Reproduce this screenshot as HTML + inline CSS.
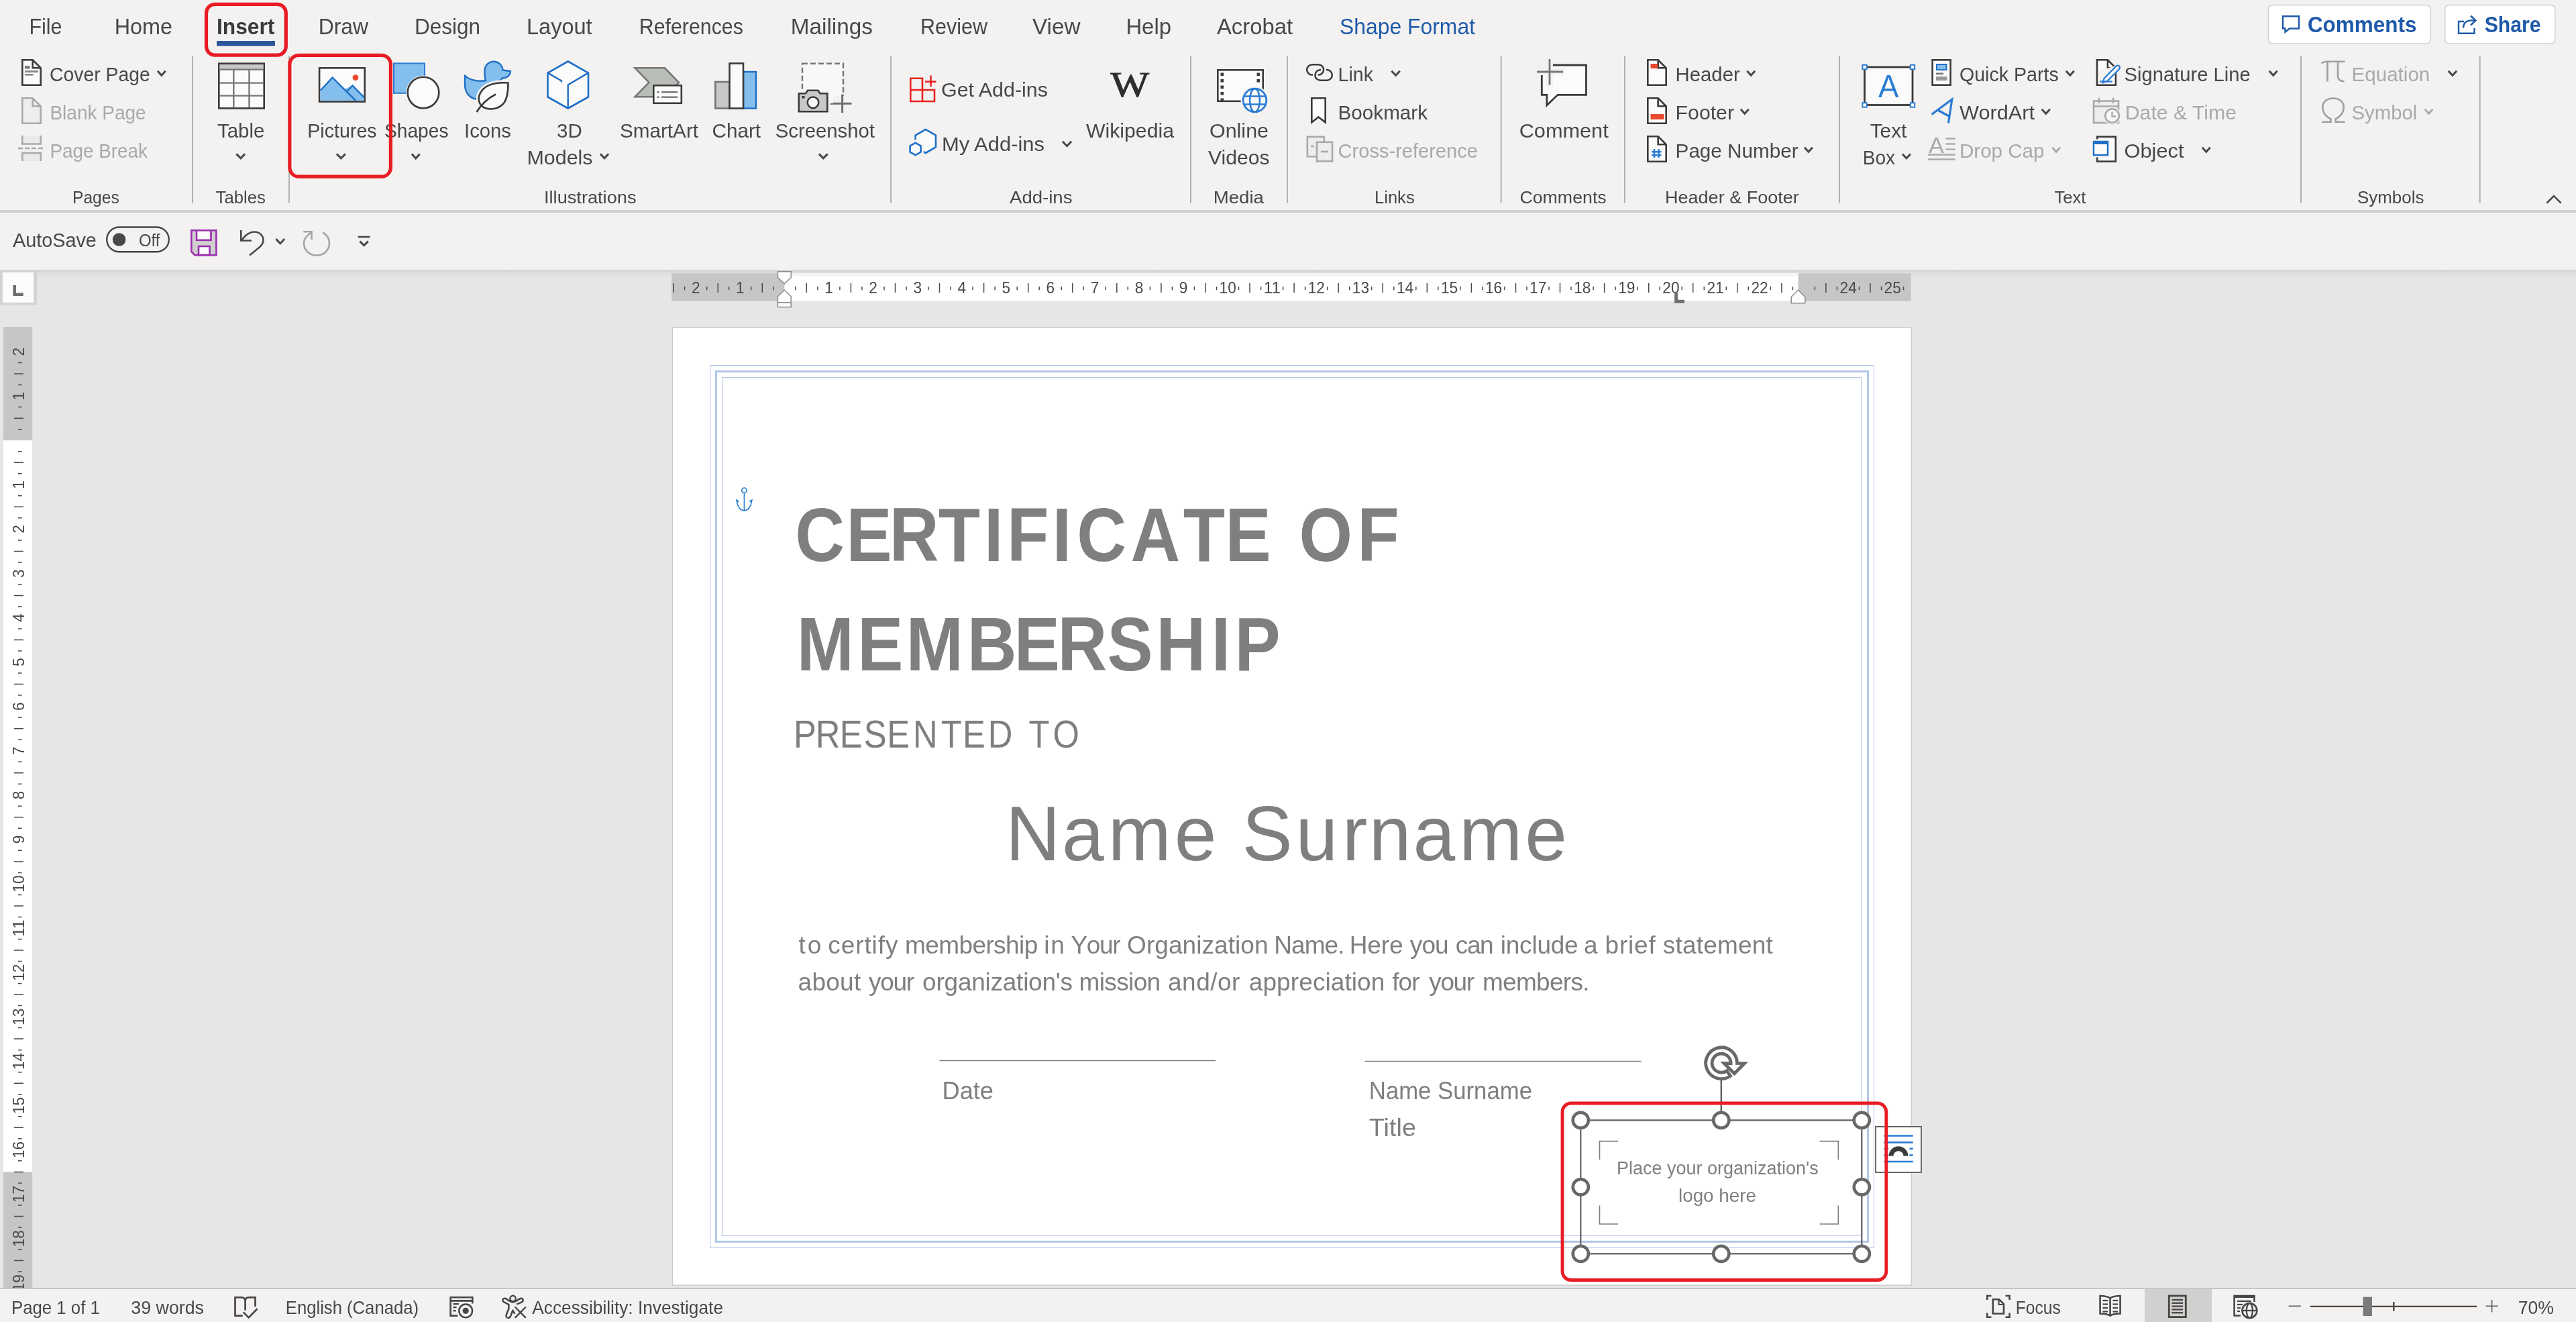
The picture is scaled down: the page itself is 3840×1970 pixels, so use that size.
<!DOCTYPE html>
<html lang="en"><head><meta charset="utf-8"><title>Certificate of Membership - Word</title>
<style>
html,body{margin:0;padding:0;background:#e6e6e6;}
body{width:3840px;height:1970px;overflow:hidden;font-family:"Liberation Sans",sans-serif;}
#app{will-change:transform;position:relative;width:3840px;height:1970px;overflow:hidden;background:#e6e6e6;}
#app>div{position:absolute;left:0;width:3840px;}
svg{position:absolute;left:0;top:0;display:block;overflow:visible;}
text{font-family:"Liberation Sans",sans-serif;white-space:pre;}
#ribbon{top:0;height:313px;background:#f3f2f1;border-bottom:4px solid #d2d0ce;}
#qat{top:317px;height:85px;background:#f3f2f1;}
#work{top:402px;height:1518px;background:#e6e6e6;}
#shadow{top:402px;height:12px;background:linear-gradient(#d2d2d2,#dedede 40%,#e6e6e6);}
#status{top:1919px;height:51px;background:#f3f2f1;border-top:2px solid #c8c6c4;box-sizing:border-box;}
</style></head><body>
<div id="app">
<div id="ribbon"><svg width="3840" height="318" viewBox="0 0 3840 318"><g class="tabs"><text x="43.4" y="50.7" font-size="33.5" fill="#484848" textLength="49.0" lengthAdjust="spacingAndGlyphs">File</text><text x="170.7" y="50.7" font-size="33.5" fill="#484848" textLength="86.3" lengthAdjust="spacingAndGlyphs">Home</text><text x="474.8" y="50.7" font-size="33.5" fill="#484848" textLength="74.2" lengthAdjust="spacingAndGlyphs">Draw</text><text x="618.0" y="50.7" font-size="33.5" fill="#484848" textLength="98.0" lengthAdjust="spacingAndGlyphs">Design</text><text x="785.0" y="50.7" font-size="33.5" fill="#484848" textLength="97.6" lengthAdjust="spacingAndGlyphs">Layout</text><text x="952.8" y="50.7" font-size="33.5" fill="#484848" textLength="155.0" lengthAdjust="spacingAndGlyphs">References</text><text x="1178.7" y="50.7" font-size="33.5" fill="#484848" textLength="122.3" lengthAdjust="spacingAndGlyphs">Mailings</text><text x="1372.0" y="50.7" font-size="33.5" fill="#484848" textLength="100.0" lengthAdjust="spacingAndGlyphs">Review</text><text x="1539.0" y="50.7" font-size="33.5" fill="#484848" textLength="71.5" lengthAdjust="spacingAndGlyphs">View</text><text x="1678.4" y="50.7" font-size="33.5" fill="#484848" textLength="67.6" lengthAdjust="spacingAndGlyphs">Help</text><text x="1814.0" y="50.7" font-size="33.5" fill="#484848" textLength="113.0" lengthAdjust="spacingAndGlyphs">Acrobat</text><text x="323.0" y="50.7" font-size="33.5" fill="#3b3a39" font-weight="700" textLength="86.4" lengthAdjust="spacingAndGlyphs">Insert</text><rect x="323.0" y="61.0" width="87.0" height="7.6" fill="#2b579a"/><text x="1997.0" y="50.7" font-size="33.5" fill="#1e5aa8" textLength="202.0" lengthAdjust="spacingAndGlyphs">Shape Format</text></g><g class="seps"><rect x="286.0" y="83.6" width="2.0" height="219.0" fill="#b3b1af"/><rect x="430.0" y="83.6" width="2.0" height="219.0" fill="#b3b1af"/><rect x="1327.0" y="83.6" width="2.0" height="219.0" fill="#b3b1af"/><rect x="1774.0" y="83.6" width="2.0" height="219.0" fill="#b3b1af"/><rect x="1918.0" y="83.6" width="2.0" height="219.0" fill="#b3b1af"/><rect x="2236.7" y="83.6" width="2.0" height="219.0" fill="#b3b1af"/><rect x="2421.0" y="83.6" width="2.0" height="219.0" fill="#b3b1af"/><rect x="2741.0" y="83.6" width="2.0" height="219.0" fill="#b3b1af"/><rect x="3429.0" y="83.6" width="2.0" height="219.0" fill="#b3b1af"/><rect x="3695.7" y="83.6" width="2.0" height="219.0" fill="#b3b1af"/></g><g class="grouplabels"><text x="108.0" y="302.5" font-size="26.5" fill="#484848" textLength="69.7" lengthAdjust="spacingAndGlyphs">Pages</text><text x="321.5" y="302.5" font-size="26.5" fill="#484848" textLength="74.5" lengthAdjust="spacingAndGlyphs">Tables</text><text x="811.0" y="302.5" font-size="26.5" fill="#484848" textLength="137.5" lengthAdjust="spacingAndGlyphs">Illustrations</text><text x="1505.0" y="302.5" font-size="26.5" fill="#484848" textLength="93.5" lengthAdjust="spacingAndGlyphs">Add-ins</text><text x="1808.7" y="302.5" font-size="26.5" fill="#484848" textLength="75.3" lengthAdjust="spacingAndGlyphs">Media</text><text x="2049.0" y="302.5" font-size="26.5" fill="#484848" textLength="59.7" lengthAdjust="spacingAndGlyphs">Links</text><text x="2265.4" y="302.5" font-size="26.5" fill="#484848" textLength="129.3" lengthAdjust="spacingAndGlyphs">Comments</text><text x="2482.0" y="302.5" font-size="26.5" fill="#484848" textLength="199.8" lengthAdjust="spacingAndGlyphs">Header &amp; Footer</text><text x="3062.5" y="302.5" font-size="26.5" fill="#484848" textLength="46.9" lengthAdjust="spacingAndGlyphs">Text</text><text x="3514.0" y="302.5" font-size="26.5" fill="#484848" textLength="99.4" lengthAdjust="spacingAndGlyphs">Symbols</text></g><g class="buttons"><text x="74.0" y="120.6" font-size="29.5" fill="#484848" textLength="149.7" lengthAdjust="spacingAndGlyphs">Cover Page</text><path d="M234.9 105.8L240.8 112.3L246.7 105.8" fill="none" stroke="#484848" stroke-width="3.0"/><text x="74.4" y="177.7" font-size="29.5" fill="#a9a9a9" textLength="143.3" lengthAdjust="spacingAndGlyphs">Blank Page</text><text x="74.4" y="234.6" font-size="29.5" fill="#a9a9a9" textLength="145.6" lengthAdjust="spacingAndGlyphs">Page Break</text><text x="324.0" y="204.7" font-size="29.5" fill="#484848" textLength="70.4" lengthAdjust="spacingAndGlyphs">Table</text><path d="M352.4 229.4L358.8 235.9L365.1 229.4" fill="none" stroke="#484848" stroke-width="3.0"/><text x="458.3" y="204.7" font-size="29.5" fill="#484848" textLength="103.3" lengthAdjust="spacingAndGlyphs">Pictures</text><path d="M501.9 229.4L508.4 235.9L514.8 229.4" fill="none" stroke="#484848" stroke-width="3.0"/><text x="573.0" y="204.7" font-size="29.5" fill="#484848" textLength="95.5" lengthAdjust="spacingAndGlyphs">Shapes</text><path d="M613.9 229.4L619.8 235.9L625.6 229.4" fill="none" stroke="#484848" stroke-width="3.0"/><text x="692.0" y="204.7" font-size="29.5" fill="#484848" textLength="70.0" lengthAdjust="spacingAndGlyphs">Icons</text><text x="830.0" y="204.7" font-size="29.5" fill="#484848" textLength="37.7" lengthAdjust="spacingAndGlyphs">3D</text><text x="785.5" y="244.6" font-size="29.5" fill="#484848" textLength="98.1" lengthAdjust="spacingAndGlyphs">Models</text><path d="M894.9 229.4L901.0 235.9L907.1 229.4" fill="none" stroke="#484848" stroke-width="3.0"/><text x="924.0" y="204.7" font-size="29.5" fill="#484848" textLength="117.0" lengthAdjust="spacingAndGlyphs">SmartArt</text><text x="1061.6" y="204.7" font-size="29.5" fill="#484848" textLength="72.4" lengthAdjust="spacingAndGlyphs">Chart</text><text x="1155.7" y="204.7" font-size="29.5" fill="#484848" textLength="148.3" lengthAdjust="spacingAndGlyphs">Screenshot</text><path d="M1220.9 229.4L1227.3 235.9L1233.7 229.4" fill="none" stroke="#484848" stroke-width="3.0"/><text x="1403.0" y="144.3" font-size="29.5" fill="#484848" textLength="159.0" lengthAdjust="spacingAndGlyphs">Get Add-ins</text><text x="1404.0" y="224.7" font-size="29.5" fill="#484848" textLength="153.0" lengthAdjust="spacingAndGlyphs">My Add-ins</text><path d="M1583.9 210.8L1590.5 217.7L1597.1 210.8" fill="none" stroke="#484848" stroke-width="3.0"/><text x="1619.0" y="204.7" font-size="29.5" fill="#484848" textLength="131.0" lengthAdjust="spacingAndGlyphs">Wikipedia</text><text x="1803.0" y="204.7" font-size="29.5" fill="#484848" textLength="88.0" lengthAdjust="spacingAndGlyphs">Online</text><text x="1801.0" y="244.6" font-size="29.5" fill="#484848" textLength="91.6" lengthAdjust="spacingAndGlyphs">Videos</text><text x="1994.6" y="120.6" font-size="29.5" fill="#484848" textLength="52.4" lengthAdjust="spacingAndGlyphs">Link</text><path d="M2074.4 105.8L2080.6 112.3L2086.8 105.8" fill="none" stroke="#484848" stroke-width="3.0"/><text x="1994.6" y="177.7" font-size="29.5" fill="#484848" textLength="133.4" lengthAdjust="spacingAndGlyphs">Bookmark</text><text x="1994.6" y="234.6" font-size="29.5" fill="#a9a9a9" textLength="208.4" lengthAdjust="spacingAndGlyphs">Cross-reference</text><text x="2264.7" y="204.7" font-size="29.5" fill="#484848" textLength="133.0" lengthAdjust="spacingAndGlyphs">Comment</text><text x="2497.6" y="120.6" font-size="29.5" fill="#484848" textLength="96.1" lengthAdjust="spacingAndGlyphs">Header</text><path d="M2604.4 105.8L2610.2 112.3L2616.1 105.8" fill="none" stroke="#484848" stroke-width="3.0"/><text x="2497.6" y="177.7" font-size="29.5" fill="#484848" textLength="87.4" lengthAdjust="spacingAndGlyphs">Footer</text><path d="M2594.9 162.8L2600.8 169.3L2606.8 162.8" fill="none" stroke="#484848" stroke-width="3.0"/><text x="2497.6" y="234.6" font-size="29.5" fill="#484848" textLength="183.0" lengthAdjust="spacingAndGlyphs">Page Number</text><path d="M2689.9 219.8L2695.9 226.3L2701.9 219.8" fill="none" stroke="#484848" stroke-width="3.0"/><text x="2787.7" y="204.7" font-size="29.5" fill="#484848" textLength="54.6" lengthAdjust="spacingAndGlyphs">Text</text><text x="2776.7" y="244.6" font-size="29.5" fill="#484848" textLength="48.3" lengthAdjust="spacingAndGlyphs">Box</text><path d="M2835.9 229.4L2841.9 235.9L2847.9 229.4" fill="none" stroke="#484848" stroke-width="3.0"/><text x="2921.0" y="120.6" font-size="29.5" fill="#484848" textLength="147.7" lengthAdjust="spacingAndGlyphs">Quick Parts</text><path d="M3079.9 105.8L3085.8 112.3L3091.8 105.8" fill="none" stroke="#484848" stroke-width="3.0"/><text x="2921.0" y="177.7" font-size="29.5" fill="#484848" textLength="112.0" lengthAdjust="spacingAndGlyphs">WordArt</text><path d="M3043.7 162.8L3049.8 169.3L3055.9 162.8" fill="none" stroke="#484848" stroke-width="3.0"/><text x="2921.0" y="234.6" font-size="29.5" fill="#a9a9a9" textLength="126.5" lengthAdjust="spacingAndGlyphs">Drop Cap</text><path d="M3059.4 219.8L3065.1 226.3L3070.8 219.8" fill="none" stroke="#a9a9a9" stroke-width="3.0"/><text x="3166.6" y="120.6" font-size="29.5" fill="#484848" textLength="188.2" lengthAdjust="spacingAndGlyphs">Signature Line</text><path d="M3382.7 105.8L3388.7 112.3L3394.6 105.8" fill="none" stroke="#484848" stroke-width="3.0"/><text x="3167.8" y="177.7" font-size="29.5" fill="#a9a9a9" textLength="166.2" lengthAdjust="spacingAndGlyphs">Date &amp; Time</text><text x="3166.6" y="234.6" font-size="29.5" fill="#484848" textLength="88.9" lengthAdjust="spacingAndGlyphs">Object</text><path d="M3282.9 219.8L3288.8 226.3L3294.7 219.8" fill="none" stroke="#484848" stroke-width="3.0"/><text x="3505.5" y="120.6" font-size="29.5" fill="#a9a9a9" textLength="116.8" lengthAdjust="spacingAndGlyphs">Equation</text><path d="M3649.7 105.8L3655.9 112.3L3662.1 105.8" fill="none" stroke="#484848" stroke-width="3.0"/><text x="3505.5" y="177.7" font-size="29.5" fill="#a9a9a9" textLength="97.9" lengthAdjust="spacingAndGlyphs">Symbol</text><path d="M3614.8 162.8L3620.6 169.3L3626.4 162.8" fill="none" stroke="#a9a9a9" stroke-width="3.0"/></g><g class="topright"><rect x="3381.5" y="7.5" width="241.5" height="57.5" fill="#fff" stroke="#d2d0ce" stroke-width="1.5" rx="6"/><text x="3439.9" y="48.0" font-size="33" fill="#1e5aa8" font-weight="700" textLength="162.5" lengthAdjust="spacingAndGlyphs">Comments</text><rect x="3644.8" y="7.5" width="164.0" height="57.5" fill="#fff" stroke="#d2d0ce" stroke-width="1.5" rx="6"/><text x="3703.7" y="48.0" font-size="33" fill="#1e5aa8" font-weight="700" textLength="83.9" lengthAdjust="spacingAndGlyphs">Share</text></g><path d="M3796.5 302.5L3807 292L3817.5 302.5" fill="none" stroke="#484848" stroke-width="2.6"/><g class="annot"><rect x="307.5" y="6.4" width="118.8" height="75.7" fill="none" stroke="#e81c24" stroke-width="5.2" rx="13"/><rect x="431.8" y="82.4" width="150.6" height="180.8" fill="none" stroke="#e81c24" stroke-width="5.2" rx="13.5"/></g><g class="ic-pages"><path d="M33.3 89.3H48.7L60.7 101.3V126.7H33.3Z" fill="#fbfbfb" stroke="#3b3a39" stroke-width="2.6" stroke-linejoin="miter"/><path d="M48.7 89.3V101.3H60.7" fill="none" stroke="#3b3a39" stroke-width="2.6"/><rect x="37.0" y="98.0" width="7.5" height="4.5" fill="#767676"/><rect x="37.0" y="105.0" width="20.0" height="3.0" fill="#8a8a8a"/><rect x="37.0" y="110.0" width="12.5" height="2.6" fill="#8a8a8a"/><path d="M33.3 146.3H48.7L60.7 158.3V183.7H33.3Z" fill="#efeeed" stroke="#a9a9a9" stroke-width="2.6" stroke-linejoin="miter"/><path d="M48.7 146.3V158.3H60.7" fill="none" stroke="#a9a9a9" stroke-width="2.6"/><path d="M33.3 202V214.5H60.7V202" fill="#ebeae9" stroke="#a9a9a9" stroke-width="2.6"/><line x1="27.0" y1="221.0" x2="64.5" y2="221.0" stroke="#a9a9a9" stroke-width="2.6" stroke-dasharray="7 3"/><path d="M33.3 240V228H60.7V240" fill="#ebeae9" stroke="#a9a9a9" stroke-width="2.6"/></g><g class="ic-table"><rect x="326.3" y="94.7" width="67.4" height="66.7" fill="#fbfbfb" stroke="#3b3a39" stroke-width="2.6"/><rect x="327.6" y="96.0" width="64.8" height="7.6" fill="#c8c8c8"/><line x1="327.0" y1="103.6" x2="393.0" y2="103.6" stroke="#767676" stroke-width="2.4" /><line x1="327.0" y1="123.6" x2="393.0" y2="123.6" stroke="#767676" stroke-width="2.4" /><line x1="327.0" y1="142.6" x2="393.0" y2="142.6" stroke="#767676" stroke-width="2.4" /><line x1="348.3" y1="103.6" x2="348.3" y2="160.0" stroke="#767676" stroke-width="2.4" /><line x1="371.5" y1="103.6" x2="371.5" y2="160.0" stroke="#767676" stroke-width="2.4" /></g><g class="ic-pictures"><rect x="476.1" y="101.3" width="67.6" height="50.2" fill="#fbfbfb" stroke="#3b3a39" stroke-width="2.6"/><path d="M477.5 135L495.6 115.5L530 150H477.5Z" fill="#83beec"/><path d="M513 133L525.5 127.5L542.4 144.8V150H527Z" fill="#83beec"/><path d="M477.5 135L495.6 115.5L530.5 150.2" fill="none" stroke="#1e6fc5" stroke-width="2.4"/><path d="M517 136.5L525.5 127.5L542.4 144.8" fill="none" stroke="#1e6fc5" stroke-width="2.4"/><circle cx="530.0" cy="115.6" r="4.4" fill="#e8492e"/></g><g class="ic-shapes"><rect x="587.0" y="94.4" width="46.0" height="44.4" fill="#83beec" stroke="#2b7cd3" stroke-width="2"/><circle cx="631.0" cy="138.0" r="25.6" fill="#f3f2f1"/><circle cx="631.0" cy="138.0" r="23.3" fill="#fbfbfb" stroke="#3b3a39" stroke-width="2.6"/></g><g class="ic-icons"><path d="M722.5 106a13.5 13.5 0 0 1 27 -1.5l11.5 1.5c-0.5 7-6 10.5-12.5 10.5c-2 4-5.5 6.5-9.5 7.5c6 3 9 8 9 13c0 8-6 11-14 11h-20c-13 0-21-9-21-22v-13.5c6 6 18 10 31 7.5c-1.500-4-1.500-10-1.500-13.500z" fill="#83beec" stroke="#1e6fc5" stroke-width="2.4" stroke-linejoin="round"/><path d="M757.5 123.500c-16-1-32 2-39.500 12c-7 9-5 20 3 24.500c10 5 24 2 30.500-7c5-7 6-18 6-29.500z" fill="#fbfbfb" stroke="#f3f2f1" stroke-width="8"/><path d="M757.5 123.500c-16-1-32 2-39.500 12c-7 9-5 20 3 24.500c10 5 24 2 30.500-7c5-7 6-18 6-29.500z" fill="#fbfbfb" stroke="#3b3a39" stroke-width="2.6"/><path d="M710.5 167C716 158 726 147 739 140.500" fill="none" stroke="#3b3a39" stroke-width="2.6"/></g><g class="ic-3d"><path d="M846.7 91.5L877 108.6V144.5L846.7 161.5L816.5 144.5V108.6Z" fill="#fbfbfb" stroke="#1e6fc5" stroke-width="2.6" stroke-linejoin="round"/><path d="M877 108.6L846.7 126.5V161.5M816.5 108.6L837 120.500V122.500" fill="none" stroke="#1e6fc5" stroke-width="2.4"/></g><g class="ic-smartart"><path d="M946.5 101.3H991L1012 123L991 144.3H946.5L967.5 122.800Z" fill="#b9bdb7" stroke="#767676" stroke-width="2.6"/><rect x="974.3" y="127.3" width="41.5" height="26.5" fill="#fbfbfb" stroke="#3b3a39" stroke-width="2.6"/><rect x="979.5" y="136.0" width="3.0" height="2.4" fill="#767676"/><rect x="986.0" y="136.0" width="24.0" height="2.4" fill="#767676"/><rect x="979.5" y="143.5" width="3.0" height="2.4" fill="#767676"/><rect x="986.0" y="143.5" width="24.0" height="2.4" fill="#767676"/></g><g class="ic-chart"><rect x="1066.3" y="122.0" width="21.0" height="39.5" fill="#c8c8c8" stroke="#767676" stroke-width="2.6"/><rect x="1108.0" y="107.0" width="19.0" height="54.5" fill="#83beec" stroke="#1e6fc5" stroke-width="2.4"/><rect x="1087.5" y="94.5" width="20.5" height="67.0" fill="#fbfbfb" stroke="#3b3a39" stroke-width="2.6"/></g><g class="ic-screenshot"><rect x="1196.0" y="94.7" width="61.0" height="60.0" fill="#f8f8f8" stroke="#767676" stroke-width="2.4" stroke-dasharray="8 4"/><rect x="1188.0" y="135.0" width="48.0" height="34.0" fill="#f3f2f1"/><path d="M1190.800 139.3H1201L1204 134.8H1219.5L1222.500 139.3H1233.3V166.3H1190.800Z" fill="#c8c8c8" stroke="#3b3a39" stroke-width="2.6"/><circle cx="1212.0" cy="152.8" r="8.3" fill="#fbfbfb" stroke="#3b3a39" stroke-width="2.6"/><rect x="1195.5" y="143.0" width="4.0" height="3.6" fill="#3b3a39"/><rect x="1241.5" y="143.0" width="29.0" height="24.0" fill="#f3f2f1"/><line x1="1241.7" y1="154.3" x2="1269.5" y2="154.3" stroke="#6e6e6e" stroke-width="3" /><line x1="1255.6" y1="140.5" x2="1255.6" y2="168.0" stroke="#6e6e6e" stroke-width="3" /></g><g class="ic-getaddins"><path d="M1357.3 116.800H1375V151H1357.3ZM1357.3 134H1393V151H1375" fill="none" stroke="#e8231e" stroke-width="2.6"/><line x1="1387.5" y1="112.5" x2="1387.5" y2="129.0" stroke="#e8231e" stroke-width="2.6" /><line x1="1379.0" y1="121.7" x2="1395.5" y2="121.7" stroke="#e8231e" stroke-width="2.6" /></g><g class="ic-myaddins"><path d="M1395.0 219.2L1379.8 228.0L1364.6 219.2L1364.6 201.6L1379.8 192.8L1395.0 201.6Z" fill="#fbfbfb" stroke="#1e6fc5" stroke-width="2.6" stroke-linejoin="round"/><path d="M1372.8 226.8L1364.6 231.5L1356.4 226.8L1356.4 217.2L1364.6 212.5L1372.8 217.2Z" fill="#f3f2f1" stroke="#f3f2f1" stroke-width="8"/><path d="M1372.6 226.6L1364.6 231.2L1356.6 226.6L1356.6 217.4L1364.6 212.8L1372.6 217.4Z" fill="#fbfbfb" stroke="#1e6fc5" stroke-width="2.6" stroke-linejoin="round"/></g><text x="1655.4" y="144.3" font-size="52" fill="#2e2e2e" style='font-family:"Liberation Serif", serif' textLength="57.6" lengthAdjust="spacingAndGlyphs" stroke="#2e2e2e" stroke-width="1">W</text><g class="ic-video"><rect x="1815.3" y="104.3" width="67.4" height="46.5" fill="#fbfbfb" stroke="#3b3a39" stroke-width="2.6"/><rect x="1819.5" y="108.5" width="4.6" height="4.6" fill="#3b3a39"/><rect x="1819.5" y="118.0" width="4.6" height="4.6" fill="#3b3a39"/><rect x="1819.5" y="127.5" width="4.6" height="4.6" fill="#3b3a39"/><rect x="1819.5" y="137.0" width="4.6" height="4.6" fill="#3b3a39"/><rect x="1819.5" y="146.5" width="4.6" height="4.6" fill="#3b3a39"/><rect x="1873.5" y="108.5" width="4.6" height="4.6" fill="#3b3a39"/><rect x="1873.5" y="118.0" width="4.6" height="4.6" fill="#3b3a39"/><circle cx="1870.5" cy="149.5" r="21.0" fill="#f3f2f1"/><circle cx="1870.5" cy="149.5" r="17.3" fill="#fbfbfb" stroke="#2b7cd3" stroke-width="2.8"/><ellipse cx="1870.5" cy="149.5" rx="7.5" ry="17.300" fill="none" stroke="#2b7cd3" stroke-width="2.600"/><line x1="1854.5" y1="143.5" x2="1886.5" y2="143.5" stroke="#2b7cd3" stroke-width="2.6" /><line x1="1854.5" y1="155.5" x2="1886.5" y2="155.5" stroke="#2b7cd3" stroke-width="2.6" /></g><g class="ic-link"><path d="M1957 111.600H1955.850A7.650 7.650 0 0 1 1955.850 96.300H1965.450A7.650 7.650 0 0 1 1965.450 111.600H1964.800" fill="none" stroke="#3b3a39" stroke-width="2.5"/><path d="M1969 104H1968.300A7.900 7.900 0 0 0 1968.300 119.800H1977.900A7.900 7.900 0 0 0 1977.900 104H1977" fill="none" stroke="#3b3a39" stroke-width="2.5"/></g><path d="M1955.3 146.300H1975.7V182.300L1965.5 174.500L1955.3 182.300Z" fill="#fbfbfb" stroke="#3b3a39" stroke-width="2.6"/><g class="ic-xref"><rect x="1948.8" y="203.8" width="25.0" height="29.5" fill="#eeedec" stroke="#a9a9a9" stroke-width="2.6"/><rect x="1963.0" y="211.8" width="23.0" height="28.5" fill="#eeedec" stroke="#a9a9a9" stroke-width="2.6"/><line x1="1954.0" y1="218.0" x2="1959.0" y2="218.0" stroke="#a9a9a9" stroke-width="2.4" /><line x1="1969.0" y1="226.0" x2="1980.0" y2="226.0" stroke="#a9a9a9" stroke-width="2.6" /></g><g class="ic-comment"><path d="M2298.300 97H2364.500V141.300H2322L2305.800 157V141.300H2298.300Z" fill="#fbfbfb" stroke="#3b3a39" stroke-width="2.8"/><rect x="2289.0" y="86.0" width="21.0" height="21.0" fill="#f3f2f1"/><line x1="2310.0" y1="86.0" x2="2310.0" y2="128.5" stroke="#f3f2f1" stroke-width="10" /><line x1="2289.0" y1="107.0" x2="2332.0" y2="107.0" stroke="#f3f2f1" stroke-width="10" /><line x1="2310.0" y1="88.0" x2="2310.0" y2="126.5" stroke="#767676" stroke-width="2.8" /><line x1="2291.0" y1="107.0" x2="2330.0" y2="107.0" stroke="#767676" stroke-width="2.8" /></g><g class="ic-hf"><path d="M2456.3 89.3H2471.7L2483.7 101.3V126.7H2456.3Z" fill="#fbfbfb" stroke="#3b3a39" stroke-width="2.6" stroke-linejoin="miter"/><path d="M2471.7 89.3V101.3H2483.7" fill="none" stroke="#3b3a39" stroke-width="2.6"/><rect x="2460.5" y="95.0" width="10.5" height="7.0" fill="#e8492e"/><path d="M2456.3 146.3H2471.7L2483.7 158.3V183.7H2456.3Z" fill="#fbfbfb" stroke="#3b3a39" stroke-width="2.6" stroke-linejoin="miter"/><path d="M2471.7 146.3V158.3H2483.7" fill="none" stroke="#3b3a39" stroke-width="2.6"/><rect x="2460.5" y="170.0" width="20.0" height="8.0" fill="#e8492e"/><path d="M2456.3 203.3H2471.7L2483.7 215.3V240.7H2456.3Z" fill="#fbfbfb" stroke="#3b3a39" stroke-width="2.6" stroke-linejoin="miter"/><path d="M2471.7 203.3V215.3H2483.7" fill="none" stroke="#3b3a39" stroke-width="2.6"/><path d="M2466 222V235M2472.500 222V235M2462 226.300H2476.500M2462 231.300H2476.500" fill="none" stroke="#2b7cd3" stroke-width="2.6"/></g><g class="ic-textbox"><rect x="2779.5" y="100.0" width="71.5" height="56.5" fill="#fbfbfb" stroke="#3b3a39" stroke-width="2.8"/><text x="2800.0" y="144.8" font-size="49" fill="#2b7cd3" textLength="30.5" lengthAdjust="spacingAndGlyphs">A</text><rect x="2776.3" y="96.8" width="6.4" height="6.4" fill="#fbfbfb" stroke="#2b7cd3" stroke-width="2"/><rect x="2847.8" y="96.8" width="6.4" height="6.4" fill="#fbfbfb" stroke="#2b7cd3" stroke-width="2"/><rect x="2776.3" y="153.3" width="6.4" height="6.4" fill="#fbfbfb" stroke="#2b7cd3" stroke-width="2"/><rect x="2847.8" y="153.3" width="6.4" height="6.4" fill="#fbfbfb" stroke="#2b7cd3" stroke-width="2"/></g><g class="ic-quickparts"><rect x="2880.6" y="89.3" width="27.0" height="37.4" fill="#fbfbfb" stroke="#3b3a39" stroke-width="2.6"/><rect x="2887.0" y="96.0" width="14.5" height="8.0" fill="#83beec" stroke="#1e6fc5" stroke-width="2"/><rect x="2886.0" y="108.5" width="11.0" height="2.6" fill="#767676"/><rect x="2886.0" y="114.0" width="16.5" height="6.0" fill="#9a9a9a"/></g><path d="M2879.500 170.500L2909.800 148L2904.500 183.500M2888.500 164L2906 173.500" fill="none" stroke="#2b7cd3" stroke-width="3.2"/><g class="ic-dropcap"><text x="2875.0" y="227.5" font-size="34" fill="#a9a9a9" textLength="23.0" lengthAdjust="spacingAndGlyphs">A</text><line x1="2900.5" y1="206.5" x2="2914.5" y2="206.5" stroke="#a9a9a9" stroke-width="2.4" /><line x1="2900.5" y1="214.5" x2="2914.5" y2="214.5" stroke="#a9a9a9" stroke-width="2.4" /><line x1="2900.5" y1="222.5" x2="2914.5" y2="222.5" stroke="#a9a9a9" stroke-width="2.4" /><line x1="2874.0" y1="230.5" x2="2914.5" y2="230.5" stroke="#a9a9a9" stroke-width="2.4" /><line x1="2874.0" y1="237.5" x2="2914.5" y2="237.5" stroke="#a9a9a9" stroke-width="2.4" /></g><g class="ic-sig"><path d="M3126.0 89.3H3141.8999999999996L3153.8999999999996 101.3V126.7H3126.0Z" fill="#fbfbfb" stroke="#3b3a39" stroke-width="2.6" stroke-linejoin="miter"/><path d="M3141.8999999999996 89.3V101.3H3153.8999999999996" fill="none" stroke="#3b3a39" stroke-width="2.6"/><path d="M3128 106L3160 96L3162 100L3140 124L3128 124Z" fill="#f3f2f1"/><path d="M3136.500 117L3154.500 98.500a3 3 0 0 1 4.500 4.500L3141 121L3134.500 123.500Z" fill="#fbfbfb" stroke="#2b7cd3" stroke-width="2.4" stroke-linejoin="round"/><line x1="3130.0" y1="121.5" x2="3149.0" y2="121.5" stroke="#2b7cd3" stroke-width="2.4" /></g><g class="ic-datetime"><rect x="3121.0" y="150.5" width="37.0" height="32.5" fill="#eeedec" stroke="#a9a9a9" stroke-width="2.6"/><line x1="3121.0" y1="158.5" x2="3158.0" y2="158.5" stroke="#a9a9a9" stroke-width="2.4" /><line x1="3129.0" y1="145.5" x2="3129.0" y2="154.0" stroke="#a9a9a9" stroke-width="2.4" /><line x1="3150.0" y1="145.5" x2="3150.0" y2="154.0" stroke="#a9a9a9" stroke-width="2.4" /><circle cx="3148.5" cy="172.5" r="13.0" fill="#f3f2f1"/><circle cx="3148.5" cy="172.5" r="10.3" fill="#f6f6f6" stroke="#a9a9a9" stroke-width="2.6"/><path d="M3148.500 166.500V173.500H3154" fill="none" stroke="#a9a9a9" stroke-width="2.4"/></g><g class="ic-object"><rect x="3126.3" y="203.8" width="27.5" height="36.8" fill="#fbfbfb" stroke="#3b3a39" stroke-width="2.6"/><rect x="3117.5" y="207.5" width="27.0" height="27.0" fill="#f3f2f1"/><rect x="3121.0" y="211.0" width="21.0" height="20.0" fill="#fbfbfb" stroke="#1e6fc5" stroke-width="2.4"/><rect x="3121.0" y="210.0" width="21.0" height="5.0" fill="#1e6fc5"/></g><g class="ic-symbols"><path d="M3460.500 94.500C3463 92.300 3466 91.800 3470 91.800H3495.500M3469.500 92V121.500M3485 92V113C3485 118.500 3487.500 121.300 3494.500 121.300" fill="none" stroke="#9f9f9f" stroke-width="2.6"/><path d="M3461 181.700H3474.500V177.500C3466 173 3462.300 166.500 3462.300 160C3462.300 151.500 3469 146.500 3478 146.500C3487 146.500 3493.700 151.500 3493.700 160C3493.700 166.500 3490 173 3481.500 177.500V181.700H3495.500" fill="none" stroke="#9f9f9f" stroke-width="2.6"/></g><g class="ic-topright"><path d="M3403 24.300H3427V42.500H3413L3406.500 47.800V42.500H3403Z" fill="none" stroke="#1e5aa8" stroke-width="2.4" stroke-linejoin="miter"/><path d="M3673 32H3665V49.800H3688.500V42" fill="none" stroke="#1e5aa8" stroke-width="2.4"/><path d="M3672 41.500C3672 34 3677 30.500 3684 30.500H3689M3683 23.500L3690.500 30.500L3683 37.500" fill="none" stroke="#1e5aa8" stroke-width="2.4"/></g></svg></div>
<div id="qat"><svg width="3840" height="85" viewBox="0 317 3840 85"><text x="19.0" y="368.3" font-size="29.5" fill="#484848" textLength="124.9" lengthAdjust="spacingAndGlyphs">AutoSave</text><g class="toggle"><rect x="159.2" y="338.5" width="92.6" height="36.8" fill="none" stroke="#484848" stroke-width="2.4" rx="18.4"/><circle cx="177.6" cy="357.0" r="9.8" fill="#484848"/><text x="207.0" y="366.6" font-size="25" fill="#484848" textLength="31.5" lengthAdjust="spacingAndGlyphs">Off</text></g><g class="ic-save"><path d="M285.300 343.300H322.400V380.200H290.500L285.300 375Z" fill="#d0cfce" stroke="#9b2fae" stroke-width="2.6" stroke-linejoin="miter"/><rect x="293.0" y="343.3" width="21.5" height="14.5" fill="#fbfbfb" stroke="#9b2fae" stroke-width="2.6"/><rect x="296.0" y="367.0" width="16.5" height="13.0" fill="#fbfbfb" stroke="#9b2fae" stroke-width="2.6"/></g><g class="ic-undo"><path d="M359.300 343V358.500H375" fill="none" stroke="#484848" stroke-width="2.6"/><path d="M360 358C366 350 372 345.500 379 345.500C387 345.500 392.500 351 392.500 358C392.500 364 388 368 383 371.500L372 380.500" fill="none" stroke="#484848" stroke-width="2.6"/></g><path d="M411.4 356.1L417.8 362.9L424.1 356.1" fill="none" stroke="#484848" stroke-width="3.0"/><g class="ic-redo"><path d="M452.300 345.300H464.500V357" fill="none" stroke="#a3a3a3" stroke-width="2.6"/><path d="M464 346.500C457 351 453 357 453 362.500C453 373 461.500 380.500 472 380.500C482.500 380.500 491 373 491 362.500C491 355.500 487 349.500 481 346.500" fill="none" stroke="#a3a3a3" stroke-width="2.6"/></g><g class="ic-custom"><line x1="533.7" y1="353.0" x2="551.5" y2="353.0" stroke="#484848" stroke-width="2.6" /><path d="M536.4 359.6L542.6 365.6L548.8 359.6" fill="none" stroke="#484848" stroke-width="3.0"/></g></svg></div>
<div id="work"><div id="shadow" style="position:absolute;left:0;top:0;width:3840px"></div><svg width="3840" height="1518" viewBox="0 402 3840 1518"><g class="tabsel"><rect x="0.0" y="402.5" width="55.0" height="52.0" fill="#d3d3d3"/><rect x="3.9" y="405.9" width="46.3" height="44.9" fill="#fcfcfc"/><path d="M21.700 425V438.800H34.800" fill="none" stroke="#6e6e6e" stroke-width="4.6"/></g><g class="hruler"><rect x="1001.2" y="407.3" width="1847.5" height="41.5" fill="#c6c6c6"/><rect x="1169.3" y="407.3" width="1511.2" height="41.5" fill="#ffffff"/><rect x="1169.3" y="407.3" width="1511.2" height="4.0" fill="#f5f5f5"/><path d="M1004.1 422V436M1020.6 427V432.300M1053.7 427V432.300M1070.2 422V436M1086.7 427V432.300M1119.7 427V432.300M1136.3 422V436M1152.8 427V432.300M1185.8 427V432.300M1202.3 422V436M1218.9 427V432.300M1251.9 427V432.300M1268.4 422V436M1284.9 427V432.300M1318.0 427V432.300M1334.5 422V436M1351.0 427V432.300M1384.0 427V432.300M1400.5 422V436M1417.1 427V432.300M1450.1 427V432.300M1466.6 422V436M1483.1 427V432.300M1516.2 427V432.300M1532.7 422V436M1549.2 427V432.300M1582.2 427V432.300M1598.8 422V436M1615.3 427V432.300M1648.3 427V432.300M1664.8 422V436M1681.3 427V432.300M1714.4 427V432.300M1730.9 422V436M1747.4 427V432.300M1780.4 427V432.300M1797.0 422V436M1813.5 427V432.300M1846.5 427V432.300M1863.0 422V436M1879.6 427V432.300M1912.6 427V432.300M1929.1 422V436M1945.6 427V432.300M1978.7 427V432.300M1995.2 422V436M2011.7 427V432.300M2044.7 427V432.300M2061.2 422V436M2077.8 427V432.300M2110.8 427V432.300M2127.3 422V436M2143.8 427V432.300M2176.9 427V432.300M2193.4 422V436M2209.9 427V432.300M2242.9 427V432.300M2259.5 422V436M2276.0 427V432.300M2309.0 427V432.300M2325.5 422V436M2342.0 427V432.300M2375.1 427V432.300M2391.6 422V436M2408.1 427V432.300M2441.1 427V432.300M2457.7 422V436M2474.2 427V432.300M2507.2 427V432.300M2523.7 422V436M2540.3 427V432.300M2573.3 427V432.300M2589.8 422V436M2606.3 427V432.300M2639.4 427V432.300M2655.9 422V436M2672.4 427V432.300M2705.4 427V432.300M2721.9 422V436M2738.5 427V432.300M2771.5 427V432.300M2788.0 422V436M2804.5 427V432.300M2837.6 427V432.300" fill="none" stroke="#4a4a4a" stroke-width="1.5"/><text x="1031.1" y="436.6" font-size="23.5" fill="#4a4a4a" textLength="12.6" lengthAdjust="spacingAndGlyphs">2</text><text x="1097.1" y="436.6" font-size="23.5" fill="#4a4a4a" textLength="12.6" lengthAdjust="spacingAndGlyphs">1</text><text x="1229.3" y="436.6" font-size="23.5" fill="#4a4a4a" textLength="12.6" lengthAdjust="spacingAndGlyphs">1</text><text x="1295.3" y="436.6" font-size="23.5" fill="#4a4a4a" textLength="12.6" lengthAdjust="spacingAndGlyphs">2</text><text x="1361.4" y="436.6" font-size="23.5" fill="#4a4a4a" textLength="12.6" lengthAdjust="spacingAndGlyphs">3</text><text x="1427.5" y="436.6" font-size="23.5" fill="#4a4a4a" textLength="12.6" lengthAdjust="spacingAndGlyphs">4</text><text x="1493.5" y="436.6" font-size="23.5" fill="#4a4a4a" textLength="12.6" lengthAdjust="spacingAndGlyphs">5</text><text x="1559.6" y="436.6" font-size="23.5" fill="#4a4a4a" textLength="12.6" lengthAdjust="spacingAndGlyphs">6</text><text x="1625.7" y="436.6" font-size="23.5" fill="#4a4a4a" textLength="12.6" lengthAdjust="spacingAndGlyphs">7</text><text x="1691.8" y="436.6" font-size="23.5" fill="#4a4a4a" textLength="12.6" lengthAdjust="spacingAndGlyphs">8</text><text x="1757.8" y="436.6" font-size="23.5" fill="#4a4a4a" textLength="12.6" lengthAdjust="spacingAndGlyphs">9</text><text x="1817.6" y="436.6" font-size="23.5" fill="#4a4a4a" textLength="25.2" lengthAdjust="spacingAndGlyphs">10</text><text x="1883.7" y="436.6" font-size="23.5" fill="#4a4a4a" textLength="25.2" lengthAdjust="spacingAndGlyphs">11</text><text x="1949.7" y="436.6" font-size="23.5" fill="#4a4a4a" textLength="25.2" lengthAdjust="spacingAndGlyphs">12</text><text x="2015.8" y="436.6" font-size="23.5" fill="#4a4a4a" textLength="25.2" lengthAdjust="spacingAndGlyphs">13</text><text x="2081.9" y="436.6" font-size="23.5" fill="#4a4a4a" textLength="25.2" lengthAdjust="spacingAndGlyphs">14</text><text x="2147.9" y="436.6" font-size="23.5" fill="#4a4a4a" textLength="25.2" lengthAdjust="spacingAndGlyphs">15</text><text x="2214.0" y="436.6" font-size="23.5" fill="#4a4a4a" textLength="25.2" lengthAdjust="spacingAndGlyphs">16</text><text x="2280.1" y="436.6" font-size="23.5" fill="#4a4a4a" textLength="25.2" lengthAdjust="spacingAndGlyphs">17</text><text x="2346.2" y="436.6" font-size="23.5" fill="#4a4a4a" textLength="25.2" lengthAdjust="spacingAndGlyphs">18</text><text x="2412.2" y="436.6" font-size="23.5" fill="#4a4a4a" textLength="25.2" lengthAdjust="spacingAndGlyphs">19</text><text x="2478.3" y="436.6" font-size="23.5" fill="#4a4a4a" textLength="25.2" lengthAdjust="spacingAndGlyphs">20</text><text x="2544.4" y="436.6" font-size="23.5" fill="#4a4a4a" textLength="25.2" lengthAdjust="spacingAndGlyphs">21</text><text x="2610.4" y="436.6" font-size="23.5" fill="#4a4a4a" textLength="25.2" lengthAdjust="spacingAndGlyphs">22</text><text x="2742.6" y="436.6" font-size="23.5" fill="#4a4a4a" textLength="25.2" lengthAdjust="spacingAndGlyphs">24</text><text x="2808.6" y="436.6" font-size="23.5" fill="#4a4a4a" textLength="25.2" lengthAdjust="spacingAndGlyphs">25</text><path d="M1159.4 404.8H1179.2V413.500L1169.3 423L1159.4 413.500Z" fill="#fdfdfd" stroke="#8c8c8c" stroke-width="1.5"/><path d="M1169.3 432.300L1179.2 441.800V450.800H1159.4V441.800Z" fill="#fdfdfd" stroke="#8c8c8c" stroke-width="1.5"/><rect x="1159.4" y="450.8" width="19.8" height="6.8" fill="#fdfdfd" stroke="#8c8c8c" stroke-width="1.5"/><path d="M2680.500 432.300L2690.800 442.500V451.700H2670.200V442.500Z" fill="#fdfdfd" stroke="#8c8c8c" stroke-width="1.5"/><path d="M2498.600 436.800V449.300H2510.900" fill="none" stroke="#707070" stroke-width="5"/></g><g class="vruler"><rect x="5.0" y="487.0" width="43.2" height="1432.5" fill="#c6c6c6"/><rect x="5.0" y="656.2" width="43.2" height="1090.2" fill="#ffffff"/><path d="M27 540.6H32.500M21 557.1H35M27 573.6H32.500M27 606.6H32.500M21 623.2H35M27 639.7H32.500M27 672.7H32.500M21 689.2H35M27 705.8H32.500M27 738.8H32.500M21 755.3H35M27 771.8H32.500M27 804.9H32.500M21 821.4H35M27 837.9H32.500M27 870.9H32.500M21 887.4H35M27 904.0H32.500M27 937.0H32.500M21 953.5H35M27 970.0H32.500M27 1003.1H32.500M21 1019.6H35M27 1036.1H32.500M27 1069.1H32.500M21 1085.7H35M27 1102.2H32.500M27 1135.2H32.500M21 1151.7H35M27 1168.2H32.500M27 1201.3H32.500M21 1217.8H35M27 1234.3H32.500M27 1267.3H32.500M21 1283.9H35M27 1300.4H32.500M27 1333.4H32.500M21 1349.9H35M27 1366.5H32.500M27 1399.5H32.500M21 1416.0H35M27 1432.5H32.500M27 1465.6H32.500M21 1482.1H35M27 1498.6H32.500M27 1531.6H32.500M21 1548.1H35M27 1564.7H32.500M27 1597.7H32.500M21 1614.2H35M27 1630.7H32.500M27 1663.8H32.500M21 1680.3H35M27 1696.8H32.500M27 1729.8H32.500M21 1746.4H35M27 1762.9H32.500M27 1795.9H32.500M21 1812.4H35M27 1828.9H32.500M27 1862.0H32.500M21 1878.5H35M27 1895.0H32.500" fill="none" stroke="#4a4a4a" stroke-width="1.5"/><g transform="translate(35.800 524.3) rotate(-90)"><text x="-6.3" y="0.0" font-size="23.5" fill="#4a4a4a" textLength="12.6" lengthAdjust="spacingAndGlyphs">2</text></g><g transform="translate(35.800 590.3) rotate(-90)"><text x="-6.3" y="0.0" font-size="23.5" fill="#4a4a4a" textLength="12.6" lengthAdjust="spacingAndGlyphs">1</text></g><g transform="translate(35.800 722.5) rotate(-90)"><text x="-6.3" y="0.0" font-size="23.5" fill="#4a4a4a" textLength="12.6" lengthAdjust="spacingAndGlyphs">1</text></g><g transform="translate(35.800 788.5) rotate(-90)"><text x="-6.3" y="0.0" font-size="23.5" fill="#4a4a4a" textLength="12.6" lengthAdjust="spacingAndGlyphs">2</text></g><g transform="translate(35.800 854.6) rotate(-90)"><text x="-6.3" y="0.0" font-size="23.5" fill="#4a4a4a" textLength="12.6" lengthAdjust="spacingAndGlyphs">3</text></g><g transform="translate(35.800 920.7) rotate(-90)"><text x="-6.3" y="0.0" font-size="23.5" fill="#4a4a4a" textLength="12.6" lengthAdjust="spacingAndGlyphs">4</text></g><g transform="translate(35.800 986.8) rotate(-90)"><text x="-6.3" y="0.0" font-size="23.5" fill="#4a4a4a" textLength="12.6" lengthAdjust="spacingAndGlyphs">5</text></g><g transform="translate(35.800 1052.8) rotate(-90)"><text x="-6.3" y="0.0" font-size="23.5" fill="#4a4a4a" textLength="12.6" lengthAdjust="spacingAndGlyphs">6</text></g><g transform="translate(35.800 1118.9) rotate(-90)"><text x="-6.3" y="0.0" font-size="23.5" fill="#4a4a4a" textLength="12.6" lengthAdjust="spacingAndGlyphs">7</text></g><g transform="translate(35.800 1185.0) rotate(-90)"><text x="-6.3" y="0.0" font-size="23.5" fill="#4a4a4a" textLength="12.6" lengthAdjust="spacingAndGlyphs">8</text></g><g transform="translate(35.800 1251.0) rotate(-90)"><text x="-6.3" y="0.0" font-size="23.5" fill="#4a4a4a" textLength="12.6" lengthAdjust="spacingAndGlyphs">9</text></g><g transform="translate(35.800 1317.1) rotate(-90)"><text x="-12.6" y="0.0" font-size="23.5" fill="#4a4a4a" textLength="25.2" lengthAdjust="spacingAndGlyphs">10</text></g><g transform="translate(35.800 1383.2) rotate(-90)"><text x="-12.6" y="0.0" font-size="23.5" fill="#4a4a4a" textLength="25.2" lengthAdjust="spacingAndGlyphs">11</text></g><g transform="translate(35.800 1449.2) rotate(-90)"><text x="-12.6" y="0.0" font-size="23.5" fill="#4a4a4a" textLength="25.2" lengthAdjust="spacingAndGlyphs">12</text></g><g transform="translate(35.800 1515.3) rotate(-90)"><text x="-12.6" y="0.0" font-size="23.5" fill="#4a4a4a" textLength="25.2" lengthAdjust="spacingAndGlyphs">13</text></g><g transform="translate(35.800 1581.4) rotate(-90)"><text x="-12.6" y="0.0" font-size="23.5" fill="#4a4a4a" textLength="25.2" lengthAdjust="spacingAndGlyphs">14</text></g><g transform="translate(35.800 1647.5) rotate(-90)"><text x="-12.6" y="0.0" font-size="23.5" fill="#4a4a4a" textLength="25.2" lengthAdjust="spacingAndGlyphs">15</text></g><g transform="translate(35.800 1713.5) rotate(-90)"><text x="-12.6" y="0.0" font-size="23.5" fill="#4a4a4a" textLength="25.2" lengthAdjust="spacingAndGlyphs">16</text></g><g transform="translate(35.800 1779.6) rotate(-90)"><text x="-12.6" y="0.0" font-size="23.5" fill="#4a4a4a" textLength="25.2" lengthAdjust="spacingAndGlyphs">17</text></g><g transform="translate(35.800 1845.7) rotate(-90)"><text x="-12.6" y="0.0" font-size="23.5" fill="#4a4a4a" textLength="25.2" lengthAdjust="spacingAndGlyphs">18</text></g><g transform="translate(35.800 1911.7) rotate(-90)"><text x="-12.6" y="0.0" font-size="23.5" fill="#4a4a4a" textLength="25.2" lengthAdjust="spacingAndGlyphs">19</text></g></g><rect x="1002.5" y="488.3" width="1846.7" height="1426.8" fill="#ffffff" stroke="#c8c8c8" stroke-width="1.2"/><g class="certborder"><rect x="1058.6" y="544.5" width="1734.9" height="1314.4" fill="none" stroke="#b3c6e7" stroke-width="1.1"/><rect x="1067.5" y="553.5" width="1717.0" height="1296.8" fill="none" stroke="#b3c6e7" stroke-width="3"/><rect x="1076.5" y="562.5" width="1698.5" height="1278.8" fill="none" stroke="#b3c6e7" stroke-width="1.1"/></g><g class="anchor"><circle cx="1109.4" cy="730.7" r="3.7" fill="none" stroke="#2a7fcf" stroke-width="1.7"/><path d="M1109.400 734.500V761M1098.300 746.500C1099.500 755 1103.500 760.500 1109.400 761C1115.300 760.500 1119.300 755 1120.500 746.500" fill="none" stroke="#2a7fcf" stroke-width="1.6"/><path d="M1097.200 743.700L1101.900 747.300L1098.300 748.200ZM1121.600 743.700L1116.900 747.300L1120.500 748.200Z" fill="#2a7fcf" stroke="#2a7fcf" stroke-width="0.6"/></g><g class="certtext"><text x="1317.0 1401.6 1473.2 1554.1 1630.0 1667.8 1743.0 1783.7 1872.7 1959.7 2029.4 2105.1 2151.7 2248.0" y="835.8" font-size="113.5" fill="#7f7f7f" font-weight="700" transform="scale(0.9 1)">CERTIFICATE OF</text><text x="1319.6 1420.2 1500.8 1602.0 1679.8 1751.6 1833.8 1915.0 2006.5 2044.9" y="999.0" font-size="113.5" fill="#7f7f7f" font-weight="700" transform="scale(0.9 1)">MEMBERSHIP</text><text x="1329.2 1366.0 1406.5 1446.8 1485.6 1529.2 1576.0 1612.5 1654.9 1696.1 1723.1 1763.6" y="1113.9" font-size="57" fill="#7f7f7f" transform="scale(0.89 1)">PRESENTED TO</text><text x="1521.9 1607.0 1676.8 1777.3 1840.9 1879.7 1961.0 2031.1 2071.8 2138.5 2208.5 2307.9" y="1281.7" font-size="114.5" fill="#7f7f7f" transform="scale(0.985 1)">Name Surname</text><text x="1190.5 1203.7 1224.3 1234.2 1253.7 1275.2 1288.4 1299.6 1308.8 1320.0 1338.5 1348.9 1379.2 1399.2 1429.4 1449.4 1469.4 1481.1 1499.0 1519.0 1526.7 1547.3 1556.3 1566.2 1586.8 1596.5 1619.8 1639.0 1658.2 1670.5 1680.0 1708.9 1721.3 1741.9 1762.5 1783.2 1791.5 1810.0 1830.7 1841.0 1849.3 1869.9 1890.5 1899.3 1925.1 1944.7 1974.6 1994.3 2004.6 2011.8 2038.3 2058.8 2071.0 2091.5 2101.7 2119.4 2139.1 2159.7 2169.8 2186.9 2206.1 2226.7 2236.7 2244.7 2265.1 2283.4 2291.4 2311.7 2332.1 2352.6 2361.1 2381.7 2392.6 2414.0 2427.0 2436.0 2457.4 2467.6 2478.8 2497.5 2507.9 2528.7 2539.2 2559.9 2591.0 2611.7 2632.5" y="1421.3" font-size="37" fill="#7f7f7f">to certify membership in Your Organization Name. Here you can include a brief statement</text><text x="1189.5 1210.4 1231.3 1252.1 1273.0 1283.3 1294.9 1312.2 1331.5 1350.8 1363.1 1375.1 1395.5 1407.6 1427.9 1448.2 1468.6 1476.5 1494.8 1515.1 1525.2 1533.1 1553.5 1573.8 1580.6 1599.1 1608.5 1638.7 1646.3 1664.2 1682.1 1689.7 1709.6 1730.2 1741.1 1762.1 1783.2 1804.2 1814.9 1835.9 1848.2 1861.7 1882.4 1903.1 1923.8 1936.2 1956.9 1975.5 1983.8 2004.5 2014.8 2023.1 2043.8 2064.4 2075.2 2084.6 2104.3 2116.6 2130.3 2147.4 2166.6 2185.8 2198.1 2209.9 2240.1 2259.9 2290.0 2309.9 2329.8 2341.4 2359.2" y="1476.0" font-size="37" fill="#7f7f7f">about your organization's mission and/or appreciation for your members.</text></g><g class="signatures"><line x1="1400.4" y1="1580.6" x2="1812.0" y2="1580.6" stroke="#7f7f7f" stroke-width="1.5" /><line x1="2034.5" y1="1581.4" x2="2446.6" y2="1581.4" stroke="#7f7f7f" stroke-width="1.5" /><text x="1404.5" y="1638.2" font-size="36.5" fill="#7f7f7f" textLength="76.5" lengthAdjust="spacingAndGlyphs">Date</text><text x="2040.8" y="1638.2" font-size="36.5" fill="#7f7f7f" textLength="243.2" lengthAdjust="spacingAndGlyphs">Name Surname</text><text x="2040.8" y="1692.5" font-size="36.5" fill="#7f7f7f" textLength="70.2" lengthAdjust="spacingAndGlyphs">Title</text></g><g class="logo"><path d="M2384.500 1728V1700.600H2412M2712.500 1700.600H2740.300V1728M2384.500 1796.500V1824H2412M2712.500 1824H2740.300V1796.500" fill="none" stroke="#7f7f7f" stroke-width="1.6"/><text x="2410.0" y="1749.8" font-size="27.5" fill="#7f7f7f" textLength="300.7" lengthAdjust="spacingAndGlyphs">Place your organization's</text><text x="2502.0" y="1791.0" font-size="27.5" fill="#7f7f7f" textLength="116.0" lengthAdjust="spacingAndGlyphs">logo here</text></g><g class="selection"><rect x="2356.3" y="1669.3" width="419.0" height="199.0" fill="none" stroke="#5f615f" stroke-width="2.2"/><line x1="2565.8" y1="1609.0" x2="2565.8" y2="1669.3" stroke="#5f615f" stroke-width="2.4" /><circle cx="2356.3" cy="1669.3" r="11.6" fill="#ffffff" stroke="#676966" stroke-width="4.6"/><circle cx="2356.3" cy="1768.8" r="11.6" fill="#ffffff" stroke="#676966" stroke-width="4.6"/><circle cx="2356.3" cy="1868.3" r="11.6" fill="#ffffff" stroke="#676966" stroke-width="4.6"/><circle cx="2565.8" cy="1669.3" r="11.6" fill="#ffffff" stroke="#676966" stroke-width="4.6"/><circle cx="2565.8" cy="1868.3" r="11.6" fill="#ffffff" stroke="#676966" stroke-width="4.6"/><circle cx="2775.3" cy="1669.3" r="11.6" fill="#ffffff" stroke="#676966" stroke-width="4.6"/><circle cx="2775.3" cy="1768.8" r="11.6" fill="#ffffff" stroke="#676966" stroke-width="4.6"/><circle cx="2775.3" cy="1868.3" r="11.6" fill="#ffffff" stroke="#676966" stroke-width="4.6"/><path d="M2579.500 1603.400A23.400 23.400 0 1 1 2589.500 1584.400L2600.500 1584.500L2585.400 1599.800L2570 1584.500L2580.100 1584.500A14 14 0 1 0 2574.100 1595.700Z" fill="#ffffff" stroke="#676966" stroke-width="4.8" stroke-linejoin="miter"/></g><g class="layoutopt"><rect x="2796.0" y="1678.9" width="68.0" height="68.1" fill="#ffffff" stroke="#5b5d5b" stroke-width="1.8"/><line x1="2808.4" y1="1692.5" x2="2851.7" y2="1692.5" stroke="#2b7cd3" stroke-width="2.6" /><line x1="2808.4" y1="1702.4" x2="2851.7" y2="1702.4" stroke="#2b7cd3" stroke-width="2.6" /><line x1="2808.4" y1="1731.0" x2="2851.7" y2="1731.0" stroke="#2b7cd3" stroke-width="2.6" /><line x1="2808.4" y1="1711.7" x2="2815.0" y2="1711.7" stroke="#2b7cd3" stroke-width="2.6" /><line x1="2846.4" y1="1711.7" x2="2851.7" y2="1711.7" stroke="#2b7cd3" stroke-width="2.6" /><line x1="2808.4" y1="1721.5" x2="2815.0" y2="1721.5" stroke="#2b7cd3" stroke-width="2.6" /><line x1="2846.4" y1="1721.5" x2="2851.7" y2="1721.5" stroke="#2b7cd3" stroke-width="2.6" /><path d="M2819.100 1722.600A10.900 10.900 0 0 1 2840.900 1722.600" fill="none" stroke="#3a3a3a" stroke-width="7"/></g><rect x="2329.0" y="1644.0" width="482.8" height="263.5" fill="none" stroke="#e81c24" stroke-width="4.8" rx="13"/></svg></div>
<div id="status"><svg width="3840" height="51" viewBox="0 1919 3840 51" style="top:-2px"><g class="sb-text"><text x="17.0" y="1957.7" font-size="27.5" fill="#484848" textLength="131.8" lengthAdjust="spacingAndGlyphs">Page 1 of 1</text><text x="195.3" y="1957.7" font-size="27.5" fill="#484848" textLength="108.7" lengthAdjust="spacingAndGlyphs">39 words</text><text x="425.8" y="1957.7" font-size="27.5" fill="#484848" textLength="198.2" lengthAdjust="spacingAndGlyphs">English (Canada)</text><text x="793.3" y="1957.7" font-size="27.5" fill="#484848" textLength="284.7" lengthAdjust="spacingAndGlyphs">Accessibility: Investigate</text></g><g class="sb-proof"><path d="M361.800 1960.700H350.500V1933.300H360.300C363.500 1933.300 365.600 1935.500 365.600 1938.500V1952.500M365.600 1938.500C365.600 1935.500 367.500 1933.300 370.500 1933.300H380.500V1947" fill="none" stroke="#484644" stroke-width="2.7"/><path d="M362.700 1955.400L370.700 1963.400L383.600 1950.300" fill="none" stroke="#484644" stroke-width="2.7"/></g><g class="sb-macro"><path d="M704.300 1942.600V1933.300H671.600V1960.600H682.300M671.600 1938.400H704.300" fill="none" stroke="#484644" stroke-width="2.6"/><line x1="675.5" y1="1943.2" x2="683.9" y2="1943.2" stroke="#484644" stroke-width="2.4" /><line x1="675.5" y1="1948.1" x2="680.6" y2="1948.1" stroke="#484644" stroke-width="2.4" /><line x1="675.5" y1="1953.2" x2="679.8" y2="1953.2" stroke="#484644" stroke-width="2.4" /><circle cx="694.2" cy="1953.3" r="9.9" fill="#f3f2f1" stroke="#484644" stroke-width="2.5"/><circle cx="694.2" cy="1953.3" r="4.6" fill="#484644"/></g><g class="sb-access"><circle cx="764.6" cy="1935.0" r="4.2" fill="none" stroke="#484644" stroke-width="2.4"/><path d="M770.300 1943.700L777.800 1940.400C780.500 1939.200 780.500 1935.600 777.600 1934.900C776.600 1934.700 775.600 1935 774.800 1935.400L769.700 1938.600M759.500 1938.600L754.400 1935.400C753.600 1935 752.600 1934.700 751.600 1934.900C748.700 1935.600 748.700 1939.200 751.400 1940.400L758.400 1943.900V1950L754.800 1959.300C753.800 1962 755.500 1963.900 757.800 1963.900C759.500 1963.900 760.500 1962.800 761.200 1961L764.300 1952.600L767.300 1957.900M759.500 1938.600C762.500 1940.800 766.700 1940.800 769.700 1938.600" fill="none" stroke="#484644" stroke-width="2.5" stroke-linejoin="round"/><path d="M767.600 1947.500L783.900 1963.800M783.900 1947.500L767.600 1963.800" fill="none" stroke="#484644" stroke-width="2.4"/></g><g class="sb-focus"><path d="M2962.300 1937V1931H2968.500M2989.500 1931H2995.600V1937M2962.300 1956.500V1962.700H2968.500M2989.500 1962.700H2995.600V1956.500" fill="none" stroke="#484644" stroke-width="2.6"/><path d="M2970.800 1936.300H2980L2987 1943.300V1957.500H2970.800Z" fill="none" stroke="#484644" stroke-width="2.6"/><path d="M2979.500 1936.300V1944H2987" fill="none" stroke="#484644" stroke-width="2.2"/><text x="3004.7" y="1957.9" font-size="27.5" fill="#484848" textLength="67.0" lengthAdjust="spacingAndGlyphs">Focus</text></g><g class="sb-read"><path d="M3145.600 1934.500V1960.500M3145.600 1934.500C3141 1931.500 3136 1931 3130.600 1931V1957.500C3136 1957.500 3141 1958 3145.600 1960.500C3150 1958 3155 1957.500 3160.600 1957.500V1931C3155 1931 3150 1931.500 3145.600 1934.500" fill="none" stroke="#484644" stroke-width="2.6" stroke-linejoin="miter"/><line x1="3134.5" y1="1938.0" x2="3142.0" y2="1938.0" stroke="#484644" stroke-width="2.2" /><line x1="3149.5" y1="1938.0" x2="3157.0" y2="1938.0" stroke="#484644" stroke-width="2.2" /><line x1="3134.5" y1="1943.5" x2="3142.0" y2="1943.5" stroke="#484644" stroke-width="2.2" /><line x1="3149.5" y1="1943.5" x2="3157.0" y2="1943.5" stroke="#484644" stroke-width="2.2" /><line x1="3134.5" y1="1949.0" x2="3142.0" y2="1949.0" stroke="#484644" stroke-width="2.2" /><line x1="3149.5" y1="1949.0" x2="3157.0" y2="1949.0" stroke="#484644" stroke-width="2.2" /><line x1="3134.5" y1="1954.5" x2="3142.0" y2="1954.5" stroke="#484644" stroke-width="2.2" /><line x1="3149.5" y1="1954.5" x2="3157.0" y2="1954.5" stroke="#484644" stroke-width="2.2" /></g><g class="sb-print"><rect x="3197.0" y="1921.0" width="100.0" height="49.0" fill="#d2d0ce"/><rect x="3233.3" y="1931.0" width="25.0" height="31.6" fill="none" stroke="#484644" stroke-width="2.8"/><line x1="3237.5" y1="1937.0" x2="3254.0" y2="1937.0" stroke="#484644" stroke-width="2.3" /><line x1="3237.5" y1="1941.8" x2="3254.0" y2="1941.8" stroke="#484644" stroke-width="2.3" /><line x1="3237.5" y1="1946.6" x2="3254.0" y2="1946.6" stroke="#484644" stroke-width="2.3" /><line x1="3237.5" y1="1951.4" x2="3254.0" y2="1951.4" stroke="#484644" stroke-width="2.3" /><line x1="3237.5" y1="1956.2" x2="3254.0" y2="1956.2" stroke="#484644" stroke-width="2.3" /></g><g class="sb-web"><path d="M3360.500 1940V1931H3330.600V1960.500H3340" fill="none" stroke="#484644" stroke-width="2.6"/><rect x="3330.6" y="1931.0" width="30.0" height="3.0" fill="#484644"/><line x1="3335.0" y1="1939.0" x2="3356.0" y2="1939.0" stroke="#484644" stroke-width="2.2" /><line x1="3335.0" y1="1944.0" x2="3343.0" y2="1944.0" stroke="#484644" stroke-width="2.2" /><line x1="3335.0" y1="1949.0" x2="3340.0" y2="1949.0" stroke="#484644" stroke-width="2.2" /><line x1="3335.0" y1="1954.0" x2="3339.0" y2="1954.0" stroke="#484644" stroke-width="2.2" /><circle cx="3353.4" cy="1953.0" r="11.0" fill="#f3f2f1" stroke="#484644" stroke-width="2.6"/><ellipse cx="3353.400" cy="1953" rx="4.600" ry="11" fill="none" stroke="#484644" stroke-width="2.300"/><line x1="3342.5" y1="1953.0" x2="3364.5" y2="1953.0" stroke="#484644" stroke-width="2.3" /></g><g class="sb-zoom"><line x1="3411.6" y1="1946.3" x2="3429.8" y2="1946.3" stroke="#6a6a6a" stroke-width="1.8" /><line x1="3444.0" y1="1946.8" x2="3692.2" y2="1946.8" stroke="#484644" stroke-width="2.2" /><line x1="3568.3" y1="1940.0" x2="3568.3" y2="1953.7" stroke="#484644" stroke-width="2.4" /><rect x="3522.6" y="1932.7" width="13.4" height="28.3" fill="#7a7a7a"/><line x1="3705.5" y1="1946.3" x2="3723.7" y2="1946.3" stroke="#6a6a6a" stroke-width="1.8" /><line x1="3714.6" y1="1937.2" x2="3714.6" y2="1955.4" stroke="#6a6a6a" stroke-width="1.8" /><text x="3753.8" y="1958.0" font-size="27.5" fill="#484848" textLength="53.2" lengthAdjust="spacingAndGlyphs">70%</text></g></svg></div>
</div>
</body></html>
